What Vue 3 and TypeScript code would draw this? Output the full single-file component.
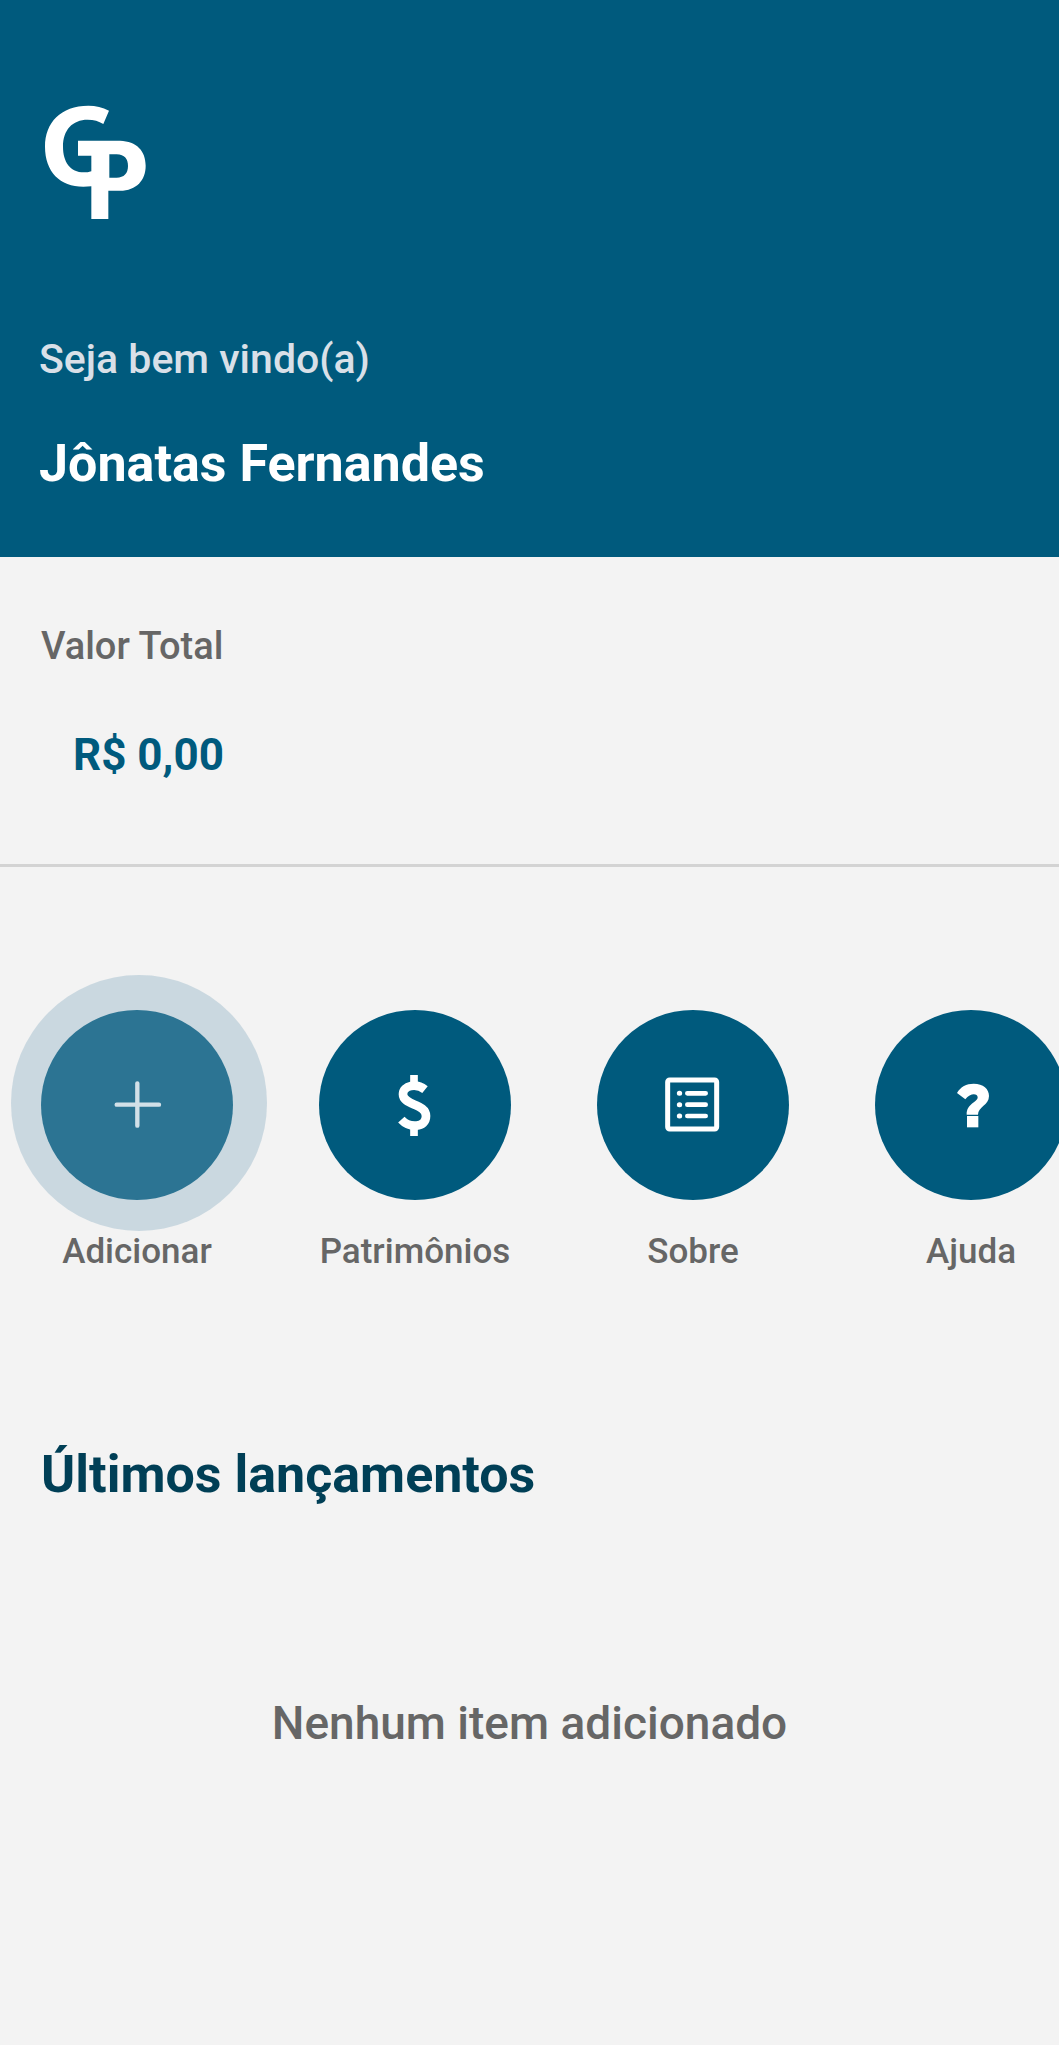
<script setup lang="ts">
import { ref } from 'vue'

type IconName = 'plus' | 'dollar' | 'list' | 'help'

interface Action {
  label: string
  icon: IconName
  viewBox: string
}

const userName = ref('Jônatas Fernandes')
const total = ref('R$ 0,00')
const pressed = ref<IconName>('plus')

const actions: Action[] = [
  { label: 'Adicionar', icon: 'plus', viewBox: '315 339 192 192' },
  { label: 'Patrimônios', icon: 'dollar', viewBox: '249 249 192 192' },
  { label: 'Sobre', icon: 'list', viewBox: '243 249 192 192' },
  { label: 'Ajuda', icon: 'help', viewBox: '297 249 192 192' },
]
</script>

<template>
  <div class="screen">
    <header class="header">
      <svg class="logo" viewBox="72 75 312 348" role="img" aria-label="GP">
        <path
          fill="#fff"
          fill-rule="evenodd"
          d="M267 92C247 81 228 77 205 77C122 77 75 128 75 200C75 275 120 320 190 320L214 319V417H265V332H300C350 332 377 300 377 257C377 212 350 184 300 182H174V227H214V274C206 277 200 277 192 277C150 277 129 245 129 200C129 150 157 119 203 119C222 119 236 123 250 132ZM268 223H290C314 223 324 238 324 258C324 280 312 293 290 293H268Z"
        />
      </svg>
      <p class="welcome">Seja bem vindo(a)</p>
      <h1 class="name">{{ userName }}</h1>
    </header>

    <main>
      <section class="balance">
        <h2 class="balance-label">Valor Total</h2>
        <p class="balance-value">{{ total }}</p>
      </section>

      <nav class="actions" aria-label="Ações">
        <button
          v-for="action in actions"
          :key="action.icon"
          type="button"
          class="action"
          @click="pressed = action.icon"
        >
          <span class="circle" :class="{ pressed: pressed === action.icon }">
            <svg class="icon" :viewBox="action.viewBox" aria-hidden="true">
              <path
                v-if="action.icon === 'plus'"
                d="M350 434H477M412 370V497"
                fill="none"
                stroke="#fff"
                stroke-width="13"
                stroke-linecap="round"
              />
              <g v-else-if="action.icon === 'dollar'" fill="none" stroke="#fff" stroke-width="26">
                <path
                  d="M375 299C350 279 309 285 309 313C309 347 378 340 378 378C378 415 327 414 304 389"
                  stroke-linejoin="round"
                />
                <path d="M342 255V281M342 411V438" stroke-width="23" />
              </g>
              <g v-else-if="action.icon === 'list'" fill="none" stroke="#fff">
                <rect x="263" y="270" width="147" height="147" rx="6" stroke-width="15" />
                <path d="M322 310H377M322 344H377M322 378H377" stroke-width="14" stroke-linecap="round" />
                <path d="M298 310H299M298 344H299M298 378H299" stroke-width="15" stroke-linecap="round" />
              </g>
              <g v-else fill="#fff">
                <path d="M351 309C362 290 379 281 401 281C430 281 447 297 447 318C447 346 414 350 414 374H380C380 339 413 338 413 322C413 310 391 308 376 328Z" />
                <rect x="381" y="378" width="34" height="34" />
              </g>
            </svg>
          </span>
          <span class="action-label">{{ action.label }}</span>
        </button>
      </nav>

      <section class="entries">
        <h2 class="entries-title">Últimos lançamentos</h2>
        <p class="empty">Nenhum item adicionado</p>
      </section>
    </main>
  </div>
</template>

<style>
body {
  margin: 0;
  background: #f3f3f3;
}
</style>

<style scoped>
.screen {
  min-height: 100vh;
  overflow: hidden;
  background: #f3f3f3;
  color: #666;
  font-family: Roboto, 'Liberation Sans', sans-serif;
  font-weight: 500;
}

h1,
h2,
p {
  margin: 0;
}

.header {
  padding: 105px 39px 61px;
  background: #005a7d;
}

.logo {
  display: block;
  width: 104px;
  height: 116px;
  margin-left: 5px;
}

.welcome {
  margin-top: 114px;
  color: #d9e0e8;
  font-size: 41px;
  line-height: 48px;
}

.name {
  margin-top: 49px;
  color: #fff;
  font-size: 52px;
  font-weight: 700;
  line-height: 64px;
}

.balance {
  padding: 65px 41px 77px;
  border-bottom: 3px solid #d3d3d3;
}

.balance-label {
  font-size: 38px;
  font-weight: 500;
  line-height: 48px;
}

.balance-value {
  margin-top: 53px;
  padding-left: 32px;
  color: #005a7d;
  font-size: 44px;
  font-weight: 700;
  line-height: 64px;
}

.actions {
  display: flex;
  gap: 86px;
  padding: 143px 41px 0;
}

.action {
  display: flex;
  flex: none;
  flex-direction: column;
  align-items: center;
  gap: 32px;
  width: 192px;
  padding: 0;
  border: 0;
  background: none;
  color: inherit;
  font: inherit;
  cursor: pointer;
}

.circle {
  position: relative;
  display: flex;
  align-items: center;
  justify-content: center;
  width: 192px;
  height: 190px;
  border-radius: 50%;
  background: #005a7d;
}

.pressed::after {
  position: absolute;
  top: -35px;
  left: -30px;
  width: 256px;
  height: 256px;
  border-radius: 50%;
  background: rgba(126, 167, 188, 0.35);
  content: '';
}

.icon {
  width: 64px;
  height: 64px;
}

.action-label {
  font-size: 35px;
  line-height: 40px;
  white-space: nowrap;
}

.entries {
  padding: 171px 41px 64px;
}

.entries-title {
  color: #003f56;
  font-size: 52px;
  font-weight: 700;
  line-height: 64px;
}

.empty {
  margin-top: 184px;
  font-size: 46px;
  line-height: 64px;
  text-align: center;
}
</style>
